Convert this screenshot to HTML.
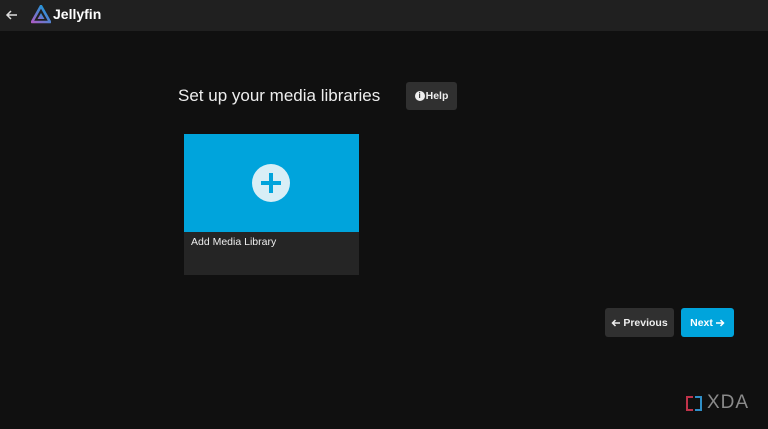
<!DOCTYPE html>
<html><head><style>
*{margin:0;padding:0;box-sizing:border-box}
body{width:768px;height:429px;background:#101010;font-family:"Liberation Sans",sans-serif;color:#ddd;position:relative;overflow:hidden}
.top{position:absolute;left:0;top:0;width:768px;height:31px;background:#202020}
.abs{position:absolute}
.btn{position:absolute;border-radius:3px;font-size:10.5px;font-weight:bold;color:#eee;display:flex;align-items:center;justify-content:center}
</style></head><body>
<div class="top"></div>
<svg class="abs" style="left:5px;top:8px" width="14" height="14" viewBox="0 0 14 14"><path d="M12 7H2M6 3L2 7l4 4" stroke="#ddd" stroke-width="1.5" fill="none"/></svg>
<svg class="abs" style="left:31px;top:5px" width="20" height="19" viewBox="0 0 20 19"><defs><linearGradient id="g" x1="0" y1="1" x2="1" y2="0"><stop offset="0" stop-color="#aa5cc3"/><stop offset="1" stop-color="#00a4dc"/></linearGradient></defs><path d="M10 1L1 17h18z" fill="none" stroke="url(#g)" stroke-width="2.6" stroke-linejoin="round"/><path d="M10 8l-3.5 6h7z" fill="url(#g)"/></svg>
<div class="abs" style="left:53px;top:6px;font-size:14px;font-weight:bold;color:#fff">Jellyfin</div>
<div class="abs" style="left:178px;top:86px;font-size:17px;color:#eee">Set up your media libraries</div>
<div class="btn" style="left:406px;top:82px;width:51px;height:28px;background:#303030"><span style="display:inline-block;width:10px;height:10px;border-radius:50%;background:#eee;color:#303030;font-size:8px;text-align:center;line-height:10px;margin-right:1px">i</span>Help</div>
<div class="abs" style="left:184px;top:134px;width:175px;height:98px;background:#00a4dc"></div>
<div class="abs" style="left:252px;top:164px;width:38px;height:38px;border-radius:50%;background:#d8eef6"></div>
<div class="abs" style="left:261px;top:181px;width:20px;height:4px;background:#00a4dc"></div>
<div class="abs" style="left:269px;top:173px;width:4px;height:20px;background:#00a4dc"></div>
<div class="abs" style="left:184px;top:232px;width:175px;height:43px;background:#252525"></div>
<div class="abs" style="left:191px;top:236px;font-size:10.5px;color:#eee">Add Media Library</div>
<div class="btn" style="left:605px;top:308px;width:69px;height:29px;background:#303030"><svg width="10" height="10" viewBox="0 0 10 10" style="margin-right:2px"><path d="M9 5H1.5M4.5 2L1.5 5l3 3" stroke="#eee" stroke-width="1.5" fill="none"/></svg>Previous</div>
<div class="btn" style="left:681px;top:308px;width:53px;height:29px;background:#00a4dc;color:#fff">Next<svg width="10" height="10" viewBox="0 0 10 10" style="margin-left:2px"><path d="M1 5h7.5M5.5 2l3 3-3 3" stroke="#fff" stroke-width="1.5" fill="none"/></svg></div>
<div class="abs" style="left:686px;top:396px;width:7px;height:15px;border:2.5px solid #c0334a;border-right:none"></div>
<div class="abs" style="left:695px;top:396px;width:7px;height:15px;border:2.5px solid #2f8fc8;border-left:none"></div>
<div class="abs" style="left:707px;top:392px;font-size:19px;color:#8a8a8a;letter-spacing:1px">XDA</div>
</body></html>
